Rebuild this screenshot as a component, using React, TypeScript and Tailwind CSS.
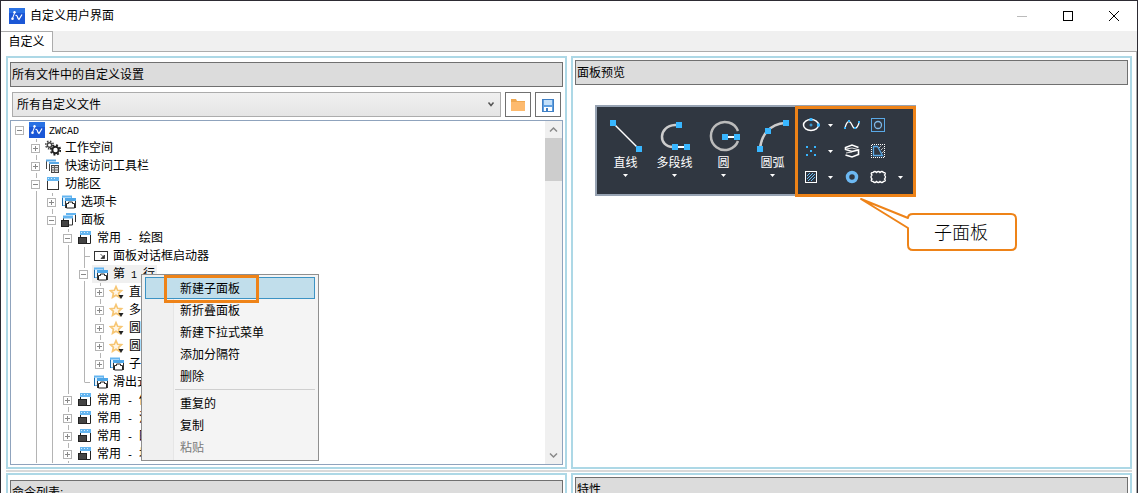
import React, { FC, ReactNode } from 'react';

interface IChildrenProps {
    children?: ReactNode;
}

type TreeIcon = 'app' | 'gears' | 'toolbar' | 'ribbon' | 'tab' | 'panels' | 'panel' | 'launcher' | 'star';

interface ITreeRow {
    label: string;
    icon: TreeIcon;
    depth: number;
    state?: 'open' | 'closed';
    // depths whose guide line runs on below this row
    lines: number[];
    selected?: boolean;
}

const rows: ITreeRow[] = [
    { label: 'ZWCAD', icon: 'app', depth: 0, state: 'open', lines: [] },
    { label: '工作空间', icon: 'gears', depth: 1, state: 'closed', lines: [1] },
    { label: '快速访问工具栏', icon: 'toolbar', depth: 1, state: 'closed', lines: [1] },
    { label: '功能区', icon: 'ribbon', depth: 1, state: 'open', lines: [1] },
    { label: '选项卡', icon: 'tab', depth: 2, state: 'closed', lines: [1, 2] },
    { label: '面板', icon: 'panels', depth: 2, state: 'open', lines: [1, 2] },
    { label: '常用 - 绘图', icon: 'panel', depth: 3, state: 'open', lines: [1, 2, 3] },
    { label: '面板对话框启动器', icon: 'launcher', depth: 4, lines: [1, 2, 3, 4] },
    { label: '第 1 行', icon: 'tab', depth: 4, state: 'open', lines: [1, 2, 3, 4], selected: true },
    { label: '直线', icon: 'star', depth: 5, state: 'closed', lines: [1, 2, 3, 4, 5] },
    { label: '多段线', icon: 'star', depth: 5, state: 'closed', lines: [1, 2, 3, 4, 5] },
    { label: '圆', icon: 'star', depth: 5, state: 'closed', lines: [1, 2, 3, 4, 5] },
    { label: '圆弧', icon: 'star', depth: 5, state: 'closed', lines: [1, 2, 3, 4, 5] },
    { label: '子面板', icon: 'tab', depth: 5, state: 'closed', lines: [1, 2, 3, 4] },
    { label: '滑出式', icon: 'tab', depth: 4, lines: [1, 2, 3] },
    { label: '常用 - 修改', icon: 'panel', depth: 3, state: 'closed', lines: [1, 2, 3] },
    { label: '常用 - 注释', icon: 'panel', depth: 3, state: 'closed', lines: [1, 2, 3] },
    { label: '常用 - 图层', icon: 'panel', depth: 3, state: 'closed', lines: [1, 2, 3] },
    { label: '常用 - 块', icon: 'panel', depth: 3, state: 'closed', lines: [1, 2, 3] },
];

const AppIcon: FC = () => (
    <svg className="size-4 shrink-0" viewBox="0 0 16 16" aria-hidden="true">
        <rect width="16" height="16" fill="#1b57d6" />
        <rect width="16" height="5" fill="#2a72e4" />
        <path d="M3.500 10.500L5.500 5" stroke="#fff" />
        <circle cx="5.500" cy="4.200" r="1.200" fill="#fff" />
        <circle cx="3.500" cy="10.800" r="1.300" fill="#fff" />
        <path d="M6.500 7.500q1.500-.5 2 1.500t1.500 2.500L13 6.500" fill="none" stroke="#fff" strokeWidth="1.200" />
    </svg>
);

const treeIcons: Record<TreeIcon, ReactNode> = {
    app: null,
    gears: (
        <>
            <circle cx="4.500" cy="5" r="2.200" fill="none" stroke="#444" strokeWidth="1.400" />
            <circle cx="4.500" cy="5" r="3.800" fill="none" stroke="#444" strokeWidth="1.500" strokeDasharray="1.500 1.480" />
            <circle cx="10.500" cy="10" r="3.200" fill="#fff" stroke="#222" strokeWidth="2" />
            <circle cx="10.500" cy="10" r="4.800" fill="none" stroke="#222" strokeWidth="1.800" strokeDasharray="1.900 1.870" />
        </>
    ),
    toolbar: (
        <>
            <path d="M1.500 11V2.500" fill="none" stroke="#444" />
            <path d="M1 2.500h10" stroke="#5aa9e6" strokeWidth="2" />
            <path d="M4.500 13V5.500" stroke="#444" />
            <path d="M4 5h10" stroke="#5aa9e6" strokeWidth="2" />
            <rect x="6.500" y="7.500" width="7" height="7" fill="#ddd" stroke="#444" />
            <path d="M6.500 9.500h7M6.500 12h7M9.500 7.500v7" stroke="#666" />
        </>
    ),
    ribbon: (
        <>
            <rect x="2.500" y="2.500" width="11" height="11" fill="#fff" stroke="#333" />
            <rect x="2" y="1" width="12" height="4" fill="#64b5f0" />
            <path d="M3 2.500h9" stroke="#d8efff" strokeDasharray="1 2" />
        </>
    ),
    tab: (
        <>
            <rect x="1.500" y="2.500" width="9" height="9" fill="#e8f5ff" stroke="#64b5f0" />
            <path d="M1 2.500h10" stroke="#64b5f0" strokeWidth="2" />
            <path d="M1.500 4v8" stroke="#1f6fae" />
            <rect x="4.500" y="5.500" width="10" height="8" fill="#fff" stroke="#333" />
            <path d="M4 5.500h11" stroke="#4da6e8" strokeWidth="3" />
            <path d="M5.500 14V9.500h2V8h4v1.500h2V14z" fill="#fff" stroke="#222" />
        </>
    ),
    panels: (
        <>
            <path d="M5 2.500h9.500V10" fill="none" stroke="#333" />
            <path d="M5 2h10" stroke="#64b5f0" strokeWidth="2" />
            <path d="M2.500 8V5h9v8H8" fill="#fff" stroke="#333" />
            <path d="M2 5h10" stroke="#64b5f0" strokeWidth="3" />
            <rect x=".500" y="8.500" width="7" height="6" fill="#444" stroke="#222" />
        </>
    ),
    panel: (
        <>
            <path d="M3.500 8V3M13.500 3v10.500H10" fill="none" stroke="#222" />
            <path d="M3 3h11" stroke="#64b5f0" strokeWidth="4" />
            <path d="M4 2.500h9" stroke="#d8efff" strokeDasharray="1 2" />
            <rect x="1.500" y="7.500" width="8" height="6" fill="#444" stroke="#222" />
        </>
    ),
    launcher: (
        <>
            <rect x="1.500" y="3.500" width="13" height="9" fill="#fff" stroke="#333" />
            <path d="M7.500 6l3 3M11.500 7v3.500H8z" stroke="#333" fill="#333" strokeWidth=".800" />
        </>
    ),
    star: (
        <>
            <path
                d="M7 2.500l1.600 3.700 4 .400-3 2.700.900 4L7 11.200l-3.500 2.100.900-4-3-2.700 4-.400z"
                fill="#fff6e6" stroke="#f7c673" strokeWidth="1.600"
            />
            <path d="M9.500 11h5l-2.500 4z" fill="#222" />
        </>
    ),
};

const TreeLabel: FC<{ text: string }> = ({ text }) => (
    <span className="whitespace-pre pl-1 pr-0.5">
        {text.split(/([\x20-\x7e]+)/).map((part, i) => (
            i % 2 ? <span key={i} className="font-['Liberation_Mono',monospace] text-[10px]">{part}</span> : part
        ))}
    </span>
);

const TreeRow: FC<ITreeRow> = ({ label, icon, depth, state, lines, selected }) => (
    <li role="treeitem" aria-expanded={state && state === 'open'} className="flex h-[18px] items-center pl-px">
        {Array.from({ length: depth + 1 }, (_, d) => {
            const isOwn = d === depth;
            const runsOn = lines.includes(d);

            return (
                <span key={d} className="grid h-full w-4 shrink-0 place-items-center">
                    <svg className="h-[18px] w-4" viewBox="0 0 16 18" fill="none" stroke="#b4b4b4" aria-hidden="true">
                        {(runsOn || (isOwn && d > 0)) && <path d={runsOn ? 'M8.500 0v18' : 'M8.500 0v9'} />}
                        {isOwn && !state && <path d="M8.500 9.500H14" />}
                        {isOwn && state && (
                            <>
                                <rect x="2" y="3" width="13" height="13" fill="#fff" stroke="none" />
                                <rect x="3.500" y="5.500" width="8" height="8" fill="#fff" />
                                <path d={state === 'open' ? 'M5 9.500h5' : 'M5 9.500h5M7.500 7v5'} stroke="#888" />
                            </>
                        )}
                    </svg>
                </span>
            );
        })}
        <span className={(selected ? 'bg-[#f0f0f0]' : '') + ' flex h-full items-center pl-px'}>
            {icon === 'app'
                ? <AppIcon />
                : <svg className="size-4 shrink-0" viewBox="0 0 16 16" aria-hidden="true">{treeIcons[icon]}</svg>}
            <TreeLabel text={label} />
        </span>
    </li>
);

const Panel: FC<IChildrenProps & { className: string }> = ({ className, children }) => (
    <section className={className + ' min-w-0 border-2 border-[#add8e6] bg-white px-0.5'}>{children}</section>
);

const PanelHeader: FC<IChildrenProps> = ({ children }) => (
    <h2 className="flex h-[25px] items-center border border-[#707070] bg-[#dcdcdc] px-px">{children}</h2>
);

const ScrollBar: FC = () => (
    <div className="flex w-[17px] shrink-0 flex-col bg-[#f0f0f0]" aria-hidden="true">
        <svg className="h-[17px]" viewBox="0 0 17 17" fill="none" stroke="#888" strokeWidth="1.500">
            <path d="M5 10.500l3.500-3.500 3.500 3.500" />
        </svg>
        <div className="h-[43px] bg-[#cdcdcd]" />
        <svg className="mt-auto h-[17px]" viewBox="0 0 17 17" fill="none" stroke="#888" strokeWidth="1.500">
            <path d="M5 6.500l3.500 3.500 3.500-3.500" />
        </svg>
    </div>
);

const Caret: FC = () => (
    <svg className="h-[3px] w-[5px]" viewBox="0 0 5 3" aria-hidden="true"><path d="M0 0h5L2.500 3z" fill="#fff" /></svg>
);

const drawTools: { label: string; drawing: ReactNode }[] = [
    {
        label: '直线',
        drawing: (
            <>
                <path d="M4 4l26 26" stroke="#fff" strokeWidth="1.500" />
                <path d="M1 1h6v6H1zM27 27h6v6h-6z" fill="#38b6ff" />
            </>
        ),
    },
    {
        label: '多段线',
        drawing: (
            <>
                <path d="M20 6h-3C0 7 0 28 15 28" fill="none" stroke="#ccc" strokeWidth="2.500" />
                <path d="M17 28h12" stroke="#fff" strokeWidth="2" />
                <path d="M18 3h6v6h-6zM14 25h6v6h-6zM26 25h6v6h-6z" fill="#38b6ff" />
            </>
        ),
    },
    {
        label: '圆',
        drawing: (
            <>
                <path d="M31 22a14 14 0 1 1 0-10" fill="none" stroke="#bbb" strokeWidth="2.500" />
                <path d="M18 18h10" stroke="#fff" strokeWidth="2" />
                <path d="M15 15h6v6h-6zM27 15h6v6h-6z" fill="#38b6ff" />
            </>
        ),
    },
    {
        label: '圆弧',
        drawing: (
            <>
                <path d="M4 30C5 16 14 5 29 4" fill="none" stroke="#ccc" strokeWidth="2.500" />
                <path d="M1 27h6v6H1zM9 9h6v6H9zM27 1h6v6h-6z" fill="#38b6ff" />
            </>
        ),
    },
];

const SmallTool: FC<IChildrenProps & { label: string }> = ({ label, children }) => (
    <button type="button" aria-label={label} className="grid place-items-center">
        <svg className="size-[18px]" viewBox="0 0 18 18" fill="none" stroke="#fff">{children}</svg>
    </button>
);

const MoreButton: FC<{ label: string }> = ({ label }) => (
    <button type="button" aria-label={label} className="grid place-items-center"><Caret /></button>
);

const SubPanel: FC = () => (
    <div className="grid auto-rows-[26px] grid-cols-[18px_20px_24px_28px_16px] pl-[5px] pt-[5px]">
        <SmallTool label="椭圆">
            <ellipse cx="9" cy="9" rx="7.500" ry="5.500" strokeWidth="1.500" />
            <path d="M9 7.500v3M7.500 9h3" stroke="#38b6ff" />
            <path d="M7.500 2h3v3h-3zM15 7.500h3v3h-3z" fill="#38b6ff" stroke="none" />
        </SmallTool>
        <MoreButton label="更多椭圆" />
        <SmallTool label="样条曲线">
            <path d="M2 12C4 4 7 4 9 9s5 4 7-2" strokeWidth="1.300" />
            <path d="M1 11h2v2H1zM5 4h2v2H5zM11 11h2v2h-2zM15 5h2v2h-2z" fill="#38b6ff" stroke="none" />
        </SmallTool>
        <SmallTool label="边界">
            <rect x="2.500" y="2.500" width="13" height="13" stroke="#5aa9e6" />
            <circle cx="9" cy="9" r="3.500" stroke="#7fb8e6" strokeWidth="1.300" />
        </SmallTool>
        <span />
        <SmallTool label="点">
            <path
                d="M4 4h2v2H4zM12 4h2v2h-2zM8 8h2v2H8zM4 12h2v2H4zM12 12h2v2h-2z"
                fill="#38b6ff" stroke="none"
            />
        </SmallTool>
        <MoreButton label="更多点" />
        <SmallTool label="螺旋">
            <path d="M15.500 5.500L9 3 2.500 5.500V7.500L9 9.500l6.500-1.500v4.500L9 15l-6.500-2" strokeWidth="1.600" />
            <path d="M3 7l6-1 6 1.500M3 11l6-1" stroke="#ddd" />
        </SmallTool>
        <SmallTool label="区域覆盖">
            <path d="M2.500 16V2.500H16M15.500 4v12M4 15.500h11" strokeDasharray="1 1" />
            <path d="M10 6l3-3M12 8l4-4M13 11l3-3" strokeDasharray="1 1" />
            <path d="M4.500 4.500h4l5 9h-9z" stroke="#5aa9e6" strokeWidth="1.300" />
        </SmallTool>
        <span />
        <SmallTool label="图案填充">
            <rect x="3.500" y="3.500" width="11" height="11" />
            <path d="M5 8l3-3M5 11l6-6M6 13l7-7M9 13l4-4" stroke="#6bbcf5" />
        </SmallTool>
        <MoreButton label="更多填充" />
        <SmallTool label="圆环">
            <circle cx="9" cy="9" r="4.500" stroke="#6cb8f2" strokeWidth="3.500" />
        </SmallTool>
        <SmallTool label="修订云线">
            <path
                d="M4 4.500q2-2 3.500 0q2-2 3.500 0q2-2 3.500 0q3 0 1 2.500q2 2 0 4q2 2.500-1 2.500q-1.500 2-3.500 0q-1.500 2-3.500 0q-1.500 2-3.500 0q-3 0-1-2.500q-2-2 0-4q-2-2.500 1-2.500z"
                strokeWidth="1.300"
            />
        </SmallTool>
        <MoreButton label="更多云线" />
    </div>
);

const PanelPreview: FC = () => (
    <div className="relative ml-5 mt-5 flex w-fit border-2 border-[#97a3b3] bg-[#303741] text-white">
        <div className="flex pb-[17px] pl-1 pt-3">
            {drawTools.map(({ label, drawing }) => (
                <button key={label} type="button" className="flex w-[49px] flex-col items-center leading-[14px]">
                    <svg className="size-[34px]" viewBox="0 0 34 34" aria-hidden="true">{drawing}</svg>
                    <span className="my-[3px]">{label}</span>
                    <span className="mt-px"><Caret /></span>
                </button>
            ))}
        </div>
        <div className="w-[117px]"><SubPanel /></div>
        <div className="absolute -bottom-[3px] -right-0.5 -top-px w-[121px] border-3 border-[#ee8318]" />
        <div className="absolute left-[263px] top-[90px] h-[54px] w-[158px]">
            <svg className="size-full" viewBox="0 0 158 54" aria-hidden="true">
                <path
                    d="M1 2L48 21Q48 17 53 17H151Q156 17 156 22V48Q156 53 151 53H53Q48 53 48 48V31Z"
                    fill="#fff" stroke="#ee8318" strokeWidth="2" strokeLinejoin="round"
                />
            </svg>
            <p className="absolute bottom-0 right-0 grid h-[37px] w-[110px] place-items-center pr-1 text-lg font-light text-black">
                子面板
            </p>
        </div>
    </div>
);

const MenuItem: FC<IChildrenProps & { active?: boolean; disabled?: boolean }> = ({ children, active, disabled }) => (
    <button
        type="button"
        role="menuitem"
        disabled={disabled}
        className={
            (active ? 'border-[#3c93c4] bg-[#c1deeb]' : 'border-transparent')
            + ' h-[22px] border pl-[34px] pt-px text-left disabled:text-[#7a7a7a]'
        }
    >
        {children}
    </button>
);

const ContextMenu: FC = () => (
    <div
        role="menu"
        className="absolute left-[140px] top-[273px] flex w-[178px] flex-col border border-[#8f8f8f] bg-[#f4f4f4] px-[3px] py-0.5"
    >
        <div className="absolute inset-y-0 left-0 w-[32px] border-r border-[#e6e6e6] bg-[#f0f0f0]" />
        <div className="relative flex flex-col">
            <MenuItem active>新建子面板</MenuItem>
            <MenuItem>新折叠面板</MenuItem>
            <MenuItem>新建下拉式菜单</MenuItem>
            <MenuItem>添加分隔符</MenuItem>
            <MenuItem>删除</MenuItem>
            <hr className="my-0.5 ml-[30px] border-[#cfcfcf]" />
            <MenuItem>重复的</MenuItem>
            <MenuItem>复制</MenuItem>
            <MenuItem disabled>粘贴</MenuItem>
        </div>
        <div className="absolute left-[22px] top-0 h-[28px] w-[95px] border-3 border-[#ee8318]" />
    </div>
);

const TitleBar: FC = () => (
    <header className="flex h-[30px] shrink-0 items-center bg-white pl-2">
        <AppIcon />
        <h1 className="pl-[5px]">自定义用户界面</h1>
        <div className="ml-auto flex">
            <button type="button" aria-label="最小化" className="grid w-[46px] place-items-center">
                <svg className="size-3" viewBox="0 0 12 12"><path d="M1 6.500h10" stroke="#bbb" /></svg>
            </button>
            <button type="button" aria-label="最大化" className="grid w-[46px] place-items-center">
                <svg className="size-3" viewBox="0 0 12 12">
                    <rect x="1.500" y="1.500" width="9" height="9" fill="none" stroke="#000" />
                </svg>
            </button>
            <button type="button" aria-label="关闭" className="grid w-[46px] place-items-center">
                <svg className="size-3" viewBox="0 0 12 12"><path d="M1 1l10 10M11 1L1 11" stroke="#000" /></svg>
            </button>
        </div>
    </header>
);

const App: FC = () => (
    <div className="relative flex h-screen flex-col overflow-hidden border-x border-t border-[#2d2b33] bg-white font-['Liberation_Sans','Noto_Sans_CJK_SC',sans-serif] text-xs text-black">
        <TitleBar />
        <nav className="flex h-[21px] shrink-0 bg-[#f0f0f0]">
            <button type="button" className="w-[52px] border-r border-t border-[#acacac] bg-white">自定义</button>
            <div className="flex-1 border-b border-[#acacac]" />
        </nav>
        <main className="flex min-h-0 flex-1 flex-col border-r border-[#acacac] pl-[5px] pr-1 pt-1">
            <div className="grid shrink-0 grid-cols-2 gap-1">
                <Panel className="pb-0.5 pt-1">
                    <PanelHeader>所有文件中的自定义设置</PanelHeader>
                    <div className="mt-[5px] flex h-[25px] gap-1 px-0.5">
                        <div className="relative min-w-0 flex-1">
                            <select
                                aria-label="自定义文件"
                                className="size-full appearance-none border border-[#acacac] bg-linear-to-b from-[#f0f0f0] to-[#e5e5e5] px-1"
                            >
                                <option>所有自定义文件</option>
                            </select>
                            <svg
                                className="pointer-events-none absolute right-1.5 top-2 size-2" viewBox="0 0 8 8"
                                fill="none" stroke="#555" strokeWidth="1.500" aria-hidden="true"
                            >
                                <path d="M1.500 2.500L4 5.500l2.500-3" />
                            </svg>
                        </div>
                        <button type="button" aria-label="打开" className="grid w-[26px] place-items-center border border-[#707070]">
                            <svg className="size-4" viewBox="0 0 16 16">
                                <path d="M1 2h5l1 2h8v10H1z" fill="#f0a850" />
                                <path d="M1 5h14v9H1z" fill="#fdba6e" />
                            </svg>
                        </button>
                        <button type="button" aria-label="保存" className="grid w-[26px] place-items-center border border-[#707070]">
                            <svg className="size-4" viewBox="0 0 16 16">
                                <rect x="2.500" y="2.500" width="11" height="12" fill="#5f9fe0" stroke="#3f7fc4" />
                                <rect x="4" y="3" width="8" height="5" fill="#c3e0fa" />
                                <rect x="4" y="10" width="8" height="4" fill="#fff" />
                                <path d="M6 11h2v3H6z" fill="#3f7fc4" />
                            </svg>
                        </button>
                    </div>
                    <div className="mt-[3px] flex border border-[#8fa3bd] bg-white">
                        <ul role="tree" className="min-w-0 flex-1 pb-px">
                            {rows.map((row, i) => <TreeRow key={i} {...row} />)}
                        </ul>
                        <ScrollBar />
                    </div>
                </Panel>
                <Panel className="pt-0.5">
                    <PanelHeader>面板预览</PanelHeader>
                    <PanelPreview />
                </Panel>
            </div>
            <hr className="my-px shrink-0 border-t-2 border-[#d9d9d9]" />
            <div className="grid min-h-0 flex-1 grid-cols-2 gap-1 overflow-hidden">
                <Panel className="border-b-0 pt-[5px]">
                    <PanelHeader>命令列表:</PanelHeader>
                </Panel>
                <Panel className="border-b-0 pt-0.5">
                    <PanelHeader>特性</PanelHeader>
                </Panel>
            </div>
        </main>
        <ContextMenu />
    </div>
);

App.displayName = 'App';

export default App;
